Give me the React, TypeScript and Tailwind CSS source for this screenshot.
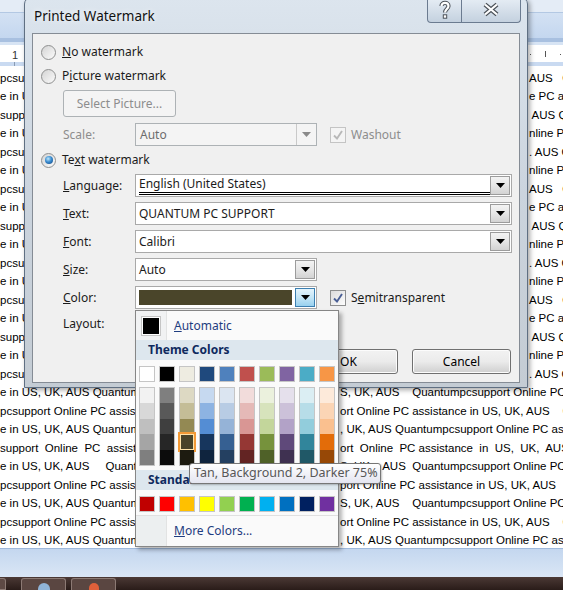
import type { ReactNode } from "react";

const DOC_FONT = "font-['Liberation_Sans',Arial,sans-serif]";

const THEME_TOP = ["#ffffff", "#000000", "#eeece1", "#1f497d", "#4f81bd", "#c0504d", "#9bbb59", "#8064a2", "#4bacc6", "#f79646"];

const THEME_SHADES = [
  ["#f2f2f2", "#d8d8d8", "#bfbfbf", "#a5a5a5", "#7f7f7f"],
  ["#7f7f7f", "#595959", "#3f3f3f", "#262626", "#0c0c0c"],
  ["#ddd9c3", "#c4bd97", "#938953", "#494429", "#1d1b10"],
  ["#c6d9f0", "#8db3e2", "#548dd4", "#17365d", "#0f243e"],
  ["#dbe5f1", "#b8cce4", "#95b3d7", "#366092", "#244061"],
  ["#f2dcdb", "#e5b9b7", "#d99694", "#953734", "#632423"],
  ["#ebf1dd", "#d7e3bc", "#c3d69b", "#76923c", "#4f6128"],
  ["#e5e0ec", "#ccc1d9", "#b2a2c7", "#5f497a", "#3f3151"],
  ["#dbeef3", "#b7dde8", "#92cddc", "#31859b", "#205867"],
  ["#fdeada", "#fbd5b5", "#fac08f", "#e36c09", "#974806"],
];

const STANDARD = ["#c00000", "#ff0000", "#ffc000", "#ffff00", "#92d050", "#00b050", "#00b0f0", "#0070c0", "#002060", "#7030a0"];

// rows of the document that sit behind the dialog: only the edges show
const TOP_ROWS: [string, string][] = [
  ["pcsupport Online PC", "AUS   Quantumpcsupport"],
  ["e in US, UK, AUS", "e PC assistance in"],
  ["support Online PC", " AUS Quantumpcsupport"],
  ["e in US, UK, AUS", "nline PC assistance"],
  ["pcsupport Online PC", ". AUS Quantumpcsupport"],
  ["e in US, UK, AUS", "nline PC assistance"],
  ["pcsupport Online PC", "AUS   Quantumpcsupport"],
  ["e in US, UK, AUS", "e PC assistance in"],
  ["support Online PC", " AUS Quantumpcsupport"],
  ["e in US, UK, AUS", "nline PC assistance"],
  ["pcsupport Online PC", ". AUS Quantumpcsupport"],
  ["e in US, UK, AUS", "nline PC assistance"],
  ["pcsupport Online PC", "AUS   Quantumpcsupport"],
  ["e in US, UK, AUS", "e PC assistance in"],
  ["support Online PC", " AUS Quantumpcsupport"],
  ["e in US, UK, AUS", "nline PC assistance"],
  ["pcsupport Online PC", ". AUS Quantumpcsupport"],
];

const BOTTOM_ROWS: [string, string][] = [
  ["e in US, UK, AUS Quantumpcsupport Online PC", "S, UK, AUS    Quantumpcsupport Online PC"],
  ["pcsupport Online PC assistance in US, UK", "ort Online PC assistance in US, UK, AUS    Quantum"],
  ["e in US, UK, AUS Quantumpcsupport Online PC", ", UK, AUS Quantumpcsupport Online PC assistance"],
  ["support  Online  PC  assistance  in  US", "ort  Online  PC assistance  in  US,  UK,  AUS   Q"],
  ["e in US, UK, AUS     Quantumpcsupport", "S, UK,   AUS  Quantumpcsupport Online PC"],
  ["pcsupport Online PC assistance in US, UK", "port Online PC assistance in US, UK, AUS   Q"],
  ["e in US, UK, AUS Quantumpcsupport Online PC", "S, UK, AUS    Quantumpcsupport Online PC"],
  ["pcsupport Online PC assistance in US, UK", "ort Online PC assistance in US, UK, AUS    Quantum"],
  ["e in US, UK, AUS Quantumpcsupport Online PC", ", UK, AUS Quantumpcsupport Online PC assistance"],
];

function DocRow({ left, right, wide }: { left: string; right: string; wide: boolean }) {
  return (
    <div className="flex h-[18.5px] items-center overflow-hidden whitespace-pre text-[11.5px] text-black">
      <span className={wide ? "w-[529px] shrink-0 overflow-hidden" : "w-[340px] shrink-0 overflow-hidden"}>{left}</span>
      <span>{right}</span>
    </div>
  );
}

function WordWindow() {
  return (
    <div className="flex h-full flex-col">
      <div className="h-[12px] bg-[#e4ecf6]" />
      <div className="h-[26px] border-t border-[#b3c8e3] bg-gradient-to-b from-[#d3e1f3] to-[#c4d7ef]" />
      <div className="h-[4px] bg-[#a8c0e0]" />
      <div className="h-[3px] bg-[#d7e4f4]" />
      {/* ruler */}
      <div className={`relative h-[17px] bg-white text-[11px] text-[#333] ${DOC_FONT}`}>
        <span className="absolute left-[12px] top-[2px]">1</span>
        <span className="absolute left-[530px] top-[9px] h-[1px] w-[1px] bg-[#555]" />
        <span className="absolute left-[545px] top-[6px] h-[6px] w-[1px] bg-[#555]" />
        <span className="absolute left-[560px] top-[9px] h-[1px] w-[1px] bg-[#555]" />
      </div>
      <div className="relative h-[4px] bg-[#c9daf1]">
        <span className="absolute left-[14px] top-0 h-[4px] w-[1px] bg-[#8a9bb3]" />
      </div>
      <div className={`flex-1 overflow-hidden bg-white pt-[3px] ${DOC_FONT}`}>
        {TOP_ROWS.map(([l, r], i) => (
          <DocRow key={`t${i}`} left={l} right={r} wide />
        ))}
        {BOTTOM_ROWS.map(([l, r], i) => (
          <DocRow key={`b${i}`} left={l} right={r} wide={false} />
        ))}
      </div>
      <div className="h-[29px] border-t border-[#9fb9dc] bg-gradient-to-b from-[#c4d7ef] to-[#dae6f5]" />
      <div className="flex h-[13px] items-start gap-[5px] bg-gradient-to-b from-[#4b3935] to-[#2a1c19] pt-[1px]">
        <div className="h-[12px] w-[6px] rounded-tr-[3px] border border-l-0 border-[#8c7a74] bg-[#5e4a45]" />
        <div className="ml-[10px] flex h-[12px] w-[45px] justify-center rounded-t-[3px] border border-b-0 border-[#8c7a74] bg-[#5a4641] pt-[4px]">
          <span className="h-[8px] w-[12px] rounded-t-full bg-[#8fb3d6]" />
        </div>
        <div className="flex h-[12px] w-[45px] justify-center rounded-t-[3px] border border-b-0 border-[#8c7a74] bg-[#5a4641] pt-[4px]">
          <span className="h-[8px] w-[10px] rounded-t-full bg-[#e0603a]" />
        </div>
      </div>
    </div>
  );
}

function Arrow({ color = "#000" }: { color?: string }) {
  return (
    <svg width="9" height="5" viewBox="0 0 9 5">
      <path d="M0 0h9L4.5 5z" fill={color} />
    </svg>
  );
}

function DropButton() {
  return (
    <div className="flex w-[20px] items-center justify-center border border-[#9c9c9c] bg-gradient-to-b from-[#f3f3f3] via-[#e6e6e6] to-[#d3d3d3]">
      <Arrow />
    </div>
  );
}

function Combo({ wide, children }: { wide: boolean; children: ReactNode }) {
  return (
    <div className={`${wide ? "w-[377px]" : "w-[182px]"} flex h-[23px] border border-[#a9a9a9] bg-white p-[1px]`}>
      <div className="flex min-w-0 flex-1 items-center pl-[2px]">{children}</div>
      <DropButton />
    </div>
  );
}

function Radio({ checked }: { checked?: boolean }) {
  return (
    <span className="flex h-[15px] w-[15px] shrink-0 items-center justify-center rounded-full border border-[#8e8f8f] bg-gradient-to-br from-[#d4d4d4] to-[#fbfbfb]">
      {checked && (
        <span className="h-[8px] w-[8px] rounded-full bg-[radial-gradient(circle_at_40%_35%,#bfe8fb_0%,#3a8cd0_45%,#0d3f7c_100%)]" />
      )}
    </span>
  );
}

function Check({ disabled }: { disabled?: boolean }) {
  const stroke = disabled ? "#b8b8b8" : "#4a5f95";
  return (
    <span
      className={`flex h-[16px] w-[16px] shrink-0 items-center justify-center border ${
        disabled ? "border-[#c4c4c4] bg-[#f4f4f4]" : "border-[#8e8f8f] bg-gradient-to-br from-[#dcdcdc] to-[#fdfdfd]"
      }`}
    >
      <svg width="12" height="12" viewBox="0 0 12 12">
        <path d="M2 6.5 L5 9.5 L10 2" fill="none" stroke={stroke} strokeWidth="1.9" />
      </svg>
    </span>
  );
}

function Label({ children }: { children: ReactNode }) {
  return <span className="w-[72px] shrink-0">{children}</span>;
}

function WinButton({ children }: { children: ReactNode }) {
  return (
    <div className="flex h-[25px] w-[99px] items-center justify-center rounded-[3px] border border-[#707070] bg-gradient-to-b from-[#f2f2f2] via-[#ebebeb] to-[#cfcfcf] text-[12px] text-black shadow-[inset_0_0_0_1px_#fcfcfc]">
      {children}
    </div>
  );
}

function CaptionButtons() {
  return (
    <div className="-mr-[1px] -mt-[1px] flex h-[26px]">
      <div className="flex w-[35px] items-center justify-center rounded-bl-[4px] border border-t-0 border-[#6b7b90] bg-gradient-to-b from-[#e8eff6] to-[#c4d1df]">
        <svg width="14" height="20" viewBox="0 0 14 20">
          <path d="M3.5 6 C3.5 1.8, 10.5 1.8, 10.5 6 C10.5 9, 7 9, 7 12.5" fill="none" stroke="#4b5158" strokeWidth="4.2" />
          <path d="M3.5 6 C3.5 1.8, 10.5 1.8, 10.5 6 C10.5 9, 7 9, 7 12.5" fill="none" stroke="#ffffff" strokeWidth="2.2" />
          <rect x="4.8" y="14.3" width="4.4" height="4.4" fill="#4b5158" />
          <rect x="5.8" y="15.3" width="2.4" height="2.4" fill="#ffffff" />
        </svg>
      </div>
      <div className="flex w-[59px] items-center justify-center rounded-br-[4px] border border-l-0 border-t-0 border-[#6b7b90] bg-gradient-to-b from-[#e8eff6] to-[#c4d1df]">
        <svg width="18" height="15" viewBox="0 0 18 15">
          <path d="M3 2.5 L15 12.5 M15 2.5 L3 12.5" stroke="#4b5158" strokeWidth="4.4" />
          <path d="M3 2.5 L15 12.5 M15 2.5 L3 12.5" stroke="#ffffff" strokeWidth="2.2" />
        </svg>
      </div>
    </div>
  );
}

function WatermarkDialog() {
  return (
    <div className="absolute left-[24px] top-[-3px] flex h-[391px] w-[504px] flex-col rounded-t-[7px] border border-[#5f6f82] bg-gradient-to-b from-[#dce5ee] via-[#cbd4de] to-[#c4ccd4] px-[7px] pb-[4px] shadow-[2px_2px_5px_rgba(0,0,0,0.35)]">
      <div className="flex h-[35px] items-start justify-between">
        <span className="pl-[2px] pt-[8px] text-[13.5px] text-[#111] [text-shadow:0_0_6px_#ffffff]">Printed Watermark</span>
        <CaptionButtons />
      </div>
      <div className="flex-1 border border-[#858c95] bg-[#f0f0f0]">
        <div className="flex flex-col pl-[8px] pt-[10px] text-[12px] text-[#1b1b1b]">
          <div className="flex h-[16px] items-center gap-[6px]">
            <Radio />
            <span>
              <span className="underline">N</span>o watermark
            </span>
          </div>
          <div className="mt-[8px] flex h-[16px] items-center gap-[6px]">
            <Radio />
            <span>
              P<span className="underline">i</span>cture watermark
            </span>
          </div>
          <div className="ml-[22px] mt-[6px] flex h-[27px] w-[113px] items-center justify-center rounded-[3px] border border-[#adb2b5] bg-[#f4f4f4] text-[#8d8d8d]">
            Select Picture...
          </div>
          <div className="ml-[22px] mt-[6px] flex h-[23px] items-center text-[#8d8d8d]">
            <Label>Scale:</Label>
            <div className="flex h-[23px] w-[182px] border border-[#adb2b5] bg-[#f4f4f4]">
              <span className="flex flex-1 items-center pl-[4px] text-[#6d6d6d]">Auto</span>
              <span className="flex w-[20px] items-center justify-center border-l border-[#c9c9c9]">
                <Arrow color="#8a8a8a" />
              </span>
            </div>
            <div className="ml-[13px] flex items-center gap-[5px]">
              <Check disabled />
              <span>Washout</span>
            </div>
          </div>
          <div className="mt-[6px] flex h-[16px] items-center gap-[6px]">
            <Radio checked />
            <span>
              Te<span className="underline">x</span>t watermark
            </span>
          </div>
          <div className="ml-[22px] mt-[6px] flex items-center">
            <Label>
              <span className="underline">L</span>anguage:
            </Label>
            <Combo wide>
              <span className="w-full border-b-[3px] border-double border-black pr-[2px] leading-[16px]">English (United States)</span>
            </Combo>
          </div>
          <div className="ml-[22px] mt-[5px] flex items-center">
            <Label>
              <span className="underline">T</span>ext:
            </Label>
            <Combo wide>QUANTUM PC SUPPORT</Combo>
          </div>
          <div className="ml-[22px] mt-[5px] flex items-center">
            <Label>
              <span className="underline">F</span>ont:
            </Label>
            <Combo wide>Calibri</Combo>
          </div>
          <div className="ml-[22px] mt-[5px] flex items-center">
            <Label>
              <span className="underline">S</span>ize:
            </Label>
            <Combo wide={false}>Auto</Combo>
          </div>
          <div className="ml-[22px] mt-[5px] flex items-center">
            <Label>
              <span className="underline">C</span>olor:
            </Label>
            <div className="flex h-[23px] w-[182px] border border-[#a9a9a9] bg-white p-[1px]">
              <div className="flex-1 p-[2px] pr-[3px]">
                <div className="h-full bg-[#4a452a]" />
              </div>
              <div className="flex w-[20px] items-center justify-center border border-[#3c7fb1] bg-gradient-to-b from-[#e5f4fc] via-[#c4e5f6] to-[#98d1ef]">
                <Arrow />
              </div>
            </div>
            <div className="ml-[13px] flex items-center gap-[5px]">
              <Check />
              <span>
                S<span className="underline">e</span>mitransparent
              </span>
            </div>
          </div>
          <div className="ml-[22px] mt-[7px] flex h-[16px] items-center">
            <Label>Layout:</Label>
          </div>
          <div className="mt-[17px] flex justify-end gap-[14px] pr-[8px]">
            <WinButton>OK</WinButton>
            <WinButton>Cancel</WinButton>
          </div>
        </div>
      </div>
    </div>
  );
}

function Swatch({ color }: { color: string }) {
  return <div className="h-[16px] w-[16px] border border-[#c5c5c5]" style={{ backgroundColor: color }} />;
}

function ColorMenu() {
  return (
    <div className="absolute left-[135px] top-[310px] flex w-[204px] flex-col border border-[#868686] bg-[#fafafa] text-[12px] shadow-[3px_3px_4px_rgba(0,0,0,0.3)]">
      <div className="flex h-[29px]">
        <div className="flex w-[31px] items-center justify-center border-r border-[#e2e3e3] bg-[#f1f2f3]">
          <div className="h-[20px] w-[20px] border border-[#c5c5c5] bg-white p-[1px]">
            <div className="h-full w-full bg-black" />
          </div>
        </div>
        <span className="flex items-center pl-[7px] text-[#1f3d80]">
          <span className="underline">A</span>utomatic
        </span>
      </div>
      <div className="flex h-[20px] items-center bg-[#dde7ee] pl-[12px] font-bold text-[#0f2a5e]">Theme Colors</div>
      <div className="mt-[6px] flex gap-[4px] pl-[3px]">
        {THEME_TOP.map((c) => (
          <Swatch key={c} color={c} />
        ))}
      </div>
      <div className="mt-[5px] flex gap-[4px] pl-[3px]">
        {THEME_SHADES.map((col, ci) => (
          <div key={ci} className="flex w-[16px] flex-col border border-[#c5c5c5]">
            {col.map((c, ri) => (
              <div key={c} className="relative h-[15.4px]" style={{ backgroundColor: c }}>
                {ci === 2 && ri === 3 && (
                  <div className="absolute -inset-[2px] border-2 border-[#f29a36] shadow-[inset_0_0_0_1px_#fde3a8]" />
                )}
              </div>
            ))}
          </div>
        ))}
      </div>
      <div className="mt-[4px] flex h-[20px] items-center bg-[#dde7ee] pl-[12px] font-bold text-[#0f2a5e]">Standard Colors</div>
      <div className="mt-[6px] flex gap-[4px] pl-[3px]">
        {STANDARD.map((c) => (
          <Swatch key={c} color={c} />
        ))}
      </div>
      <div className="mt-[3px] h-[1px] bg-[#e0e0e0]" />
      <div className="flex h-[30px]">
        <div className="w-[31px] border-r border-[#e2e3e3] bg-[#eceff0]" />
        <span className="flex items-center pl-[7px] text-[#1f3d80]">
          <span className="underline">M</span>ore Colors...
        </span>
      </div>
    </div>
  );
}

export default function App() {
  return (
    <div className="relative h-[590px] w-[563px] overflow-hidden bg-white font-['Noto_Sans',sans-serif]">
      <WordWindow />
      <WatermarkDialog />
      <ColorMenu />
      <div className="absolute left-[189px] top-[463px] flex h-[21px] w-[192px] items-center rounded-[3px] border border-[#767676] bg-gradient-to-b from-[#ffffff] to-[#e4e5f0] pl-[4px] text-[12.5px] text-[#575757] shadow-[1px_1px_2px_rgba(0,0,0,0.25)]">
        Tan, Background 2, Darker 75%
      </div>
    </div>
  );
}
